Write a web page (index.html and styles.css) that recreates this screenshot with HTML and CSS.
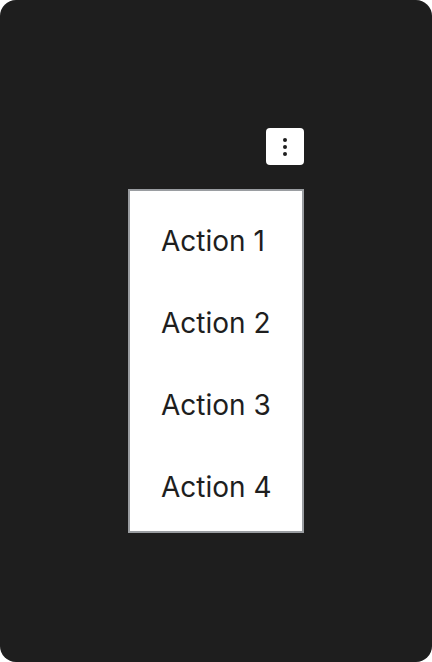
FILE: index.html
```html
<!DOCTYPE html>
<html>
<head>
<meta charset="utf-8">
<link rel="stylesheet" href="styles.css">
</head>
<body>
<div class="card">
  <button class="trigger" aria-label="More">
    <svg width="4" height="18" viewBox="0 0 4 18"><circle cx="2" cy="2" r="2"/><circle cx="2" cy="9" r="2"/><circle cx="2" cy="16" r="2"/></svg>
  </button>
  <ul class="menu">
    <li class="item">Action 1</li>
    <li class="item">Action 2</li>
    <li class="item">Action 3</li>
    <li class="item">Action 4</li>
  </ul>
</div>
</body>
</html>
```
FILE: styles.css
```css
html, body {
  margin: 0;
  padding: 0;
  background: #ffffff;
}
.card {
  width: 432px;
  height: 662px;
  box-sizing: border-box;
  background: #1e1e1e;
  border-radius: 16px;
  display: flex;
  flex-direction: column;
  align-items: flex-end;
  padding: 128px 128px 0 0;
  font-family: Inter, "Noto Sans", sans-serif;
}
.trigger {
  width: 38px;
  height: 37px;
  border: none;
  border-radius: 4px;
  background: #ffffff;
  padding: 0;
  display: flex;
  align-items: center;
  justify-content: center;
  color: #1e1e1e;
}
.trigger svg {
  fill: #1e1e1e;
}
.menu {
  list-style: none;
  margin: 24px 0 0 0;
  width: 176px;
  box-sizing: border-box;
  padding: 9px 0 3px 0;
  background: #ffffff;
  border: 2px solid #9a9da1;
}
.item {
  padding: 25px 0 25px 31px;
  line-height: 32px;
  font-size: 28px;
  color: #1e1e1e;
}
```
